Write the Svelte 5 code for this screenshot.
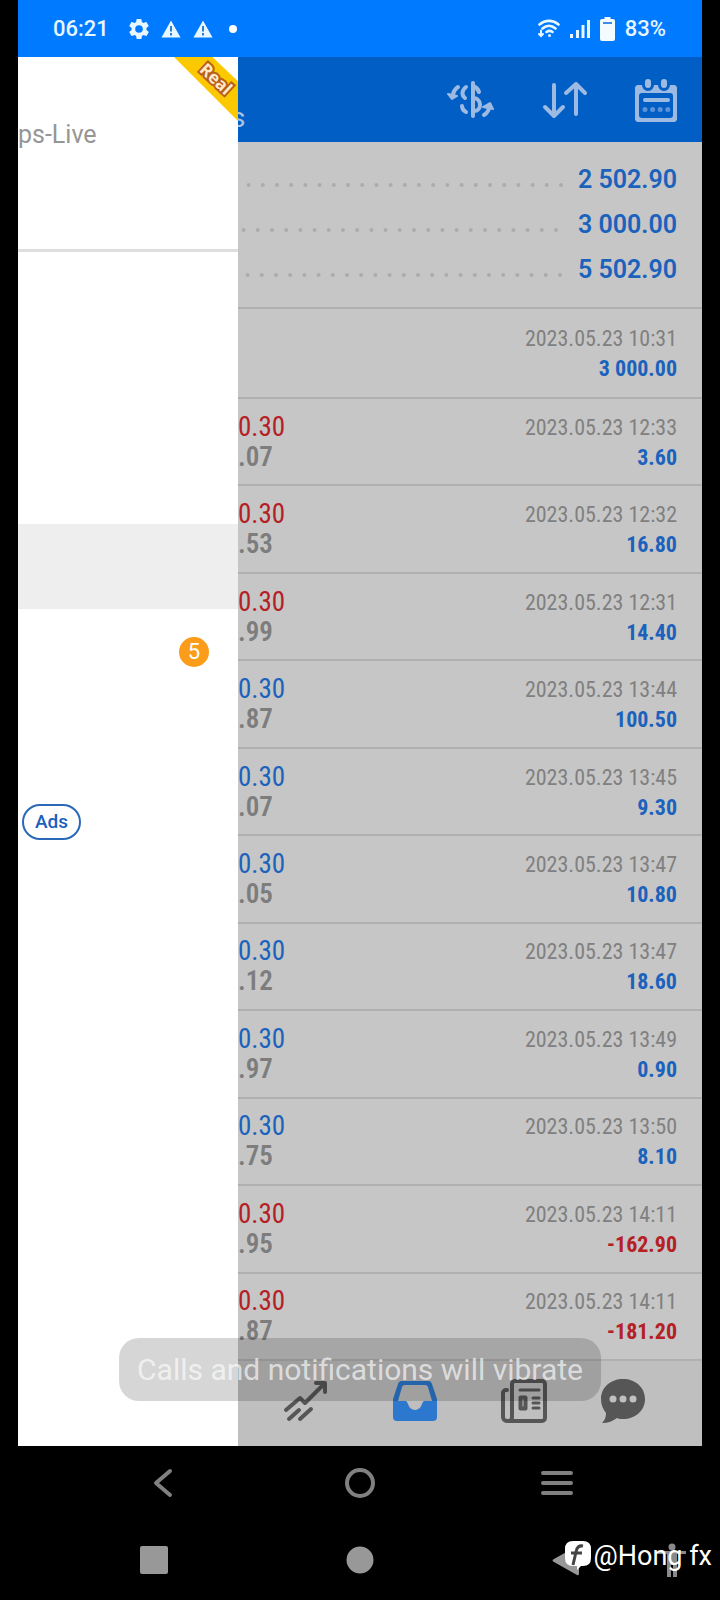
<svelte:options runes={true} />

<script>
	const summary = [
		{ value: '2 502.90', phase: 0 },
		{ value: '3 000.00', phase: 5 },
		{ value: '5 502.90', phase: 1 }
	];

	const deals = [
		{ date: '2023.05.23 10:31', profit: '3 000.00' },
		{ side: 'sell', volume: '0.30', price: '.07', date: '2023.05.23 12:33', profit: '3.60' },
		{ side: 'sell', volume: '0.30', price: '.53', date: '2023.05.23 12:32', profit: '16.80' },
		{ side: 'sell', volume: '0.30', price: '.99', date: '2023.05.23 12:31', profit: '14.40' },
		{ side: 'buy', volume: '0.30', price: '.87', date: '2023.05.23 13:44', profit: '100.50' },
		{ side: 'buy', volume: '0.30', price: '.07', date: '2023.05.23 13:45', profit: '9.30' },
		{ side: 'buy', volume: '0.30', price: '.05', date: '2023.05.23 13:47', profit: '10.80' },
		{ side: 'buy', volume: '0.30', price: '.12', date: '2023.05.23 13:47', profit: '18.60' },
		{ side: 'buy', volume: '0.30', price: '.97', date: '2023.05.23 13:49', profit: '0.90' },
		{ side: 'buy', volume: '0.30', price: '.75', date: '2023.05.23 13:50', profit: '8.10' },
		{ side: 'sell', volume: '0.30', price: '.95', date: '2023.05.23 14:11', profit: '-162.90' },
		{ side: 'sell', volume: '0.30', price: '.87', date: '2023.05.23 14:11', profit: '-181.20' }
	];

	const menu = [
		{ name: 'Trade' },
		{ name: 'News' },
		{ name: 'Charts' },
		{ name: 'History', active: true },
		{ name: 'Mailbox', count: '5' },
		{ name: 'Journal' },
		{ name: 'Settings', ads: true }
	];
</script>

<div class="page">
	<header class="status">
		<span class="clock">06:21</span>
		<div class="status-left">
			<svg width="20" height="20" viewBox="2 2 20 20" fill="#e8f6ff">
				<path
					fill-rule="evenodd"
					d="M19.4 13a7.500 7.500 0 0 0 0-2l2.100-1.650a.5.5 0 0 0 .12-.64l-2-3.460a.5.5 0 0 0-.61-.22l-2.490 1a7.300 7.300 0 0 0-1.690-.98l-.38-2.650A.49.49 0 0 0 14 2h-4a.49.49 0 0 0-.49.420l-.38 2.650c-.61.25-1.170.59-1.690.98l-2.490-1a.49.49 0 0 0-.61.22l-2 3.460a.49.49 0 0 0 .12.640L4.600 11a7.500 7.500 0 0 0 0 2l-2.110 1.650a.5.5 0 0 0-.12.64l2 3.460c.12.22.39.3.61.22l2.490-1c.52.4 1.080.73 1.690.98l.38 2.650c.03.24.24.42.49.42h4c.25 0 .46-.18.49-.42l.38-2.650a7.300 7.300 0 0 0 1.690-.98l2.490 1c.23.09.49 0 .61-.22l2-3.460a.5.5 0 0 0-.12-.64zM12 15.800a3.800 3.800 0 1 1 0-7.600 3.800 3.800 0 0 1 0 7.600z"
				/>
			</svg>
			{#each [1, 2] as n (n)}
				<svg width="20" height="18" viewBox="0 0 20 18">
					<path d="M10 0.500 19.500 17.500H0.500z" fill="#e8f6ff" />
					<path d="M10 6v5.500M10 13v2.500" stroke="#2a7fd0" stroke-width="2" />
				</svg>
			{/each}
			<svg class="more" width="8" height="8" viewBox="0 0 8 8"><circle cx="4" cy="4" r="4" fill="#fff" /></svg>
		</div>
		<div class="status-right">
			<svg width="22" height="20" viewBox="0 0 22 20" fill="none" stroke="#e8f6ff" stroke-width="2.600" stroke-linecap="round">
				<path d="M1.500 5.500C7 .6 15 .6 20.500 5.500M4.500 9.500c4-3.600 9-3.600 13 0M8.500 13c2-1.500 4-1.500 6 0" />
				<circle cx="11.500" cy="16.500" r="1.500" fill="#e8f6ff" stroke="none" />
				<path d="M3 11.500v5M1 15l2 2 2-2" stroke-width="2" />
			</svg>
			<svg width="20" height="20" viewBox="0 0 20 20" fill="#e8f6ff">
				<path d="M0 15h3v4H0zM6 11h3v8H6zM11.500 6h3v13h-3zM17 1h3v18h-3z" />
			</svg>
			<svg width="15" height="24" viewBox="0 0 15 24">
				<path d="M4.500 0h6v2H13a2 2 0 0 1 2 2v18a2 2 0 0 1-2 2H2a2 2 0 0 1-2-2V4a2 2 0 0 1 2-2h2.500z" fill="#f4fbff" />
				<path d="M3 6h9" stroke="#3b8ee8" stroke-width="2" />
			</svg>
			<span>83%</span>
		</div>
	</header>

	<div class="app">
		<aside class="drawer">
			<div class="account">
				<div class="ribbon"><span>Real</span></div>
				<span class="server">ps-Live</span>
			</div>
			<nav class="menu">
				{#each menu as item (item.name)}
					<a href="#{item.name.toLowerCase()}" class="menu-item" class:active={item.active} aria-label={item.name}>
						{#if item.count}<span class="count">{item.count}</span>{/if}
						{#if item.ads}<span class="ads">Ads</span>{/if}
					</a>
				{/each}
			</nav>
		</aside>

		<main class="history">
			<div class="toolbar">
				<span class="toolbar-title">s</span>
				<button aria-label="Symbols">
					<svg width="48" height="38" viewBox="0 0 48 38" fill="none" stroke="#9dbbe2" stroke-width="4" stroke-linecap="round">
						<path d="M26 2v33" />
						<path d="M32 11c-1-3-3-5-6-6M27 17c8 1 8 13 0 13" />
						<path d="M19 6c-4 3-5 8-1 11M15 25c0 3 2 5 4 6" />
						<path d="M11 6c-3 2-5 5-5 9" />
						<path d="M1 13 5 18 10 15z" fill="#9dbbe2" stroke-width="2" stroke-linejoin="round" />
						<path d="M37 34c3-2 5-4 5-8" />
						<path d="M36 26 43 22l3 6z" fill="#9dbbe2" stroke-width="2" stroke-linejoin="round" />
					</svg>
				</button>
				<button aria-label="Sort">
					<svg width="46" height="38" viewBox="0 0 46 38" fill="none" stroke="#9dbbe2" stroke-width="4" stroke-linecap="round" stroke-linejoin="round">
						<path d="M12 4v31M3 26l9 9 9-9M34 33V3M24 12l10-9 9 9" />
					</svg>
				</button>
				<button aria-label="Period">
					<svg width="42" height="44" viewBox="0 0 42 44">
						<path fill-rule="evenodd" fill="#9dbbe2" d="M2 7h5a6 6 0 0 0 12 0h4a6 6 0 0 0 12 0h5l2 2v33l-2 2H2l-2-2V9zM7 15a3 3 0 0 0-3 3v19a3 3 0 0 0 3 3h28a3 3 0 0 0 3-3V18a3 3 0 0 0-3-3z" />
						<rect x="10" y="1" width="6" height="9" rx="3" fill="#9dbbe2" />
						<rect x="26" y="1" width="6" height="9" rx="3" fill="#9dbbe2" />
						<path d="M10 22h23" stroke="#9dbbe2" stroke-width="4" stroke-linecap="round" />
						<path d="M10 31.500h24" stroke="#5b93d8" stroke-width="5" stroke-linecap="round" stroke-dasharray="0 7.600" />
					</svg>
				</button>
			</div>

			<div class="summary">
				{#each summary as line (line.value)}
					<div class="summary-row">
						<svg class="leader" width="100%" height="6">
							<line x1="100%" y1="3" x2="0" y2="3" stroke-dashoffset={-line.phase} />
						</svg>
						<strong>{line.value}</strong>
					</div>
				{/each}
			</div>

			<ul class="deals">
				{#each deals as deal}
					<li>
						<div class="deal-left">
							{#if deal.volume}
								<span class="volume {deal.side}">{deal.volume}</span>
								<span class="price">{deal.price}</span>
							{/if}
						</div>
						<div class="deal-right">
							<time>{deal.date}</time>
							<strong class:loss={deal.profit.startsWith('-')}>{deal.profit}</strong>
						</div>
					</li>
				{/each}
			</ul>

			<nav class="tabs">
				<button aria-label="Trade">
					<svg width="44" height="44" viewBox="0 0 44 44" fill="none" stroke="#565656" stroke-width="4" stroke-linecap="round" stroke-linejoin="round">
						<path d="M3 31 17 19l5 5L41 5M33 4h9v9M6 40l10-9M17 40l11-10" />
					</svg>
				</button>
				<button aria-label="History">
					<svg width="44" height="44" viewBox="0 0 44 44">
						<path fill="#2c78cf" fill-rule="evenodd" d="M9 2h26a4 4 0 0 1 4 3l5 15v18a4 4 0 0 1-4 4H4a4 4 0 0 1-4-4V20L5 5a4 4 0 0 1 4-3zM12 6a3 3 0 0 0-3 2L5 22h8c2 0 2 9 9 9s7-9 9-9h8L35 8a3 3 0 0 0-3-2z" />
					</svg>
				</button>
				<button aria-label="News">
					<svg width="46" height="44" viewBox="0 0 46 44" fill="none" stroke="#565656" stroke-width="4" stroke-linecap="round" stroke-linejoin="round">
						<path d="M6 11H5a3 3 0 0 0-3 3v24a4 4 0 0 0 4 4h35a3 3 0 0 0 3-3V5a3 3 0 0 0-3-3H14a3 3 0 0 0-3 3v33a4 4 0 0 1-3 4" />
						<path d="M19 11h19M32 19h6M32 24h6M32 29h6" stroke-width="3" />
						<path d="M19.500 18.500h5v11h-5z" />
					</svg>
				</button>
				<button aria-label="Messages">
					<svg width="44" height="46" viewBox="0 0 44 46">
						<path fill="#565656" d="M22 1c12 0 22 8 22 20s-10 20-22 20c-2 0-4 0-6-1-4 3-9 5-15 5 3-3 4-6 4-10C2 31 0 27 0 21 0 9 10 1 22 1z" />
						<g fill="#c0c0c0"><circle cx="12" cy="21" r="3.500" /><circle cx="22" cy="21" r="3.500" /><circle cx="32" cy="21" r="3.500" /></g>
					</svg>
				</button>
			</nav>
		</main>
		<div class="toast" role="status">Calls and notifications will vibrate</div>
	</div>

	<nav class="system">
		<button aria-label="Back">
			<svg width="20" height="30" viewBox="0 0 20 30" fill="none" stroke="#808080" stroke-width="4" stroke-linecap="round" stroke-linejoin="round">
				<path d="M17 3 3 15l14 12" />
			</svg>
		</button>
		<button aria-label="Home">
			<svg width="32" height="32" viewBox="0 0 32 32" fill="none" stroke="#808080" stroke-width="4"><circle cx="16" cy="16" r="13" /></svg>
		</button>
		<button aria-label="Recent apps">
			<svg width="32" height="26" viewBox="0 0 32 26" stroke="#808080" stroke-width="4" stroke-linecap="round"><path d="M2 3h28M2 13h28M2 23h28" /></svg>
		</button>
	</nav>

	<nav class="system outer">
		<button aria-label="Recent apps">
			<svg width="30" height="30" viewBox="0 0 30 30"><rect x="1" y="1" width="28" height="28" rx="2" fill="#989898" /></svg>
		</button>
		<button aria-label="Home">
			<svg width="28" height="28" viewBox="0 0 28 28"><circle cx="14" cy="14" r="13.500" fill="#989898" /></svg>
		</button>
		<button aria-label="Back">
			<svg width="28" height="32" viewBox="0 0 28 32"><path d="M2 15 25 2q2-1 2 2v25q0 3-2 2L2 18q-3-1.500 0-3z" fill="#989898" /></svg>
		</button>
		<button aria-label="Accessibility">
			<svg width="28" height="34" viewBox="0 0 28 34" fill="#8a8a8a">
				<circle cx="14" cy="4" r="3.500" />
				<path d="M0 8h28v3h-9v23h-4V22h-2v12H9V11H0z" />
			</svg>
		</button>
		<div class="watermark">
			<svg width="26" height="30" viewBox="0 0 26 30">
				<path d="M8 0h10q8 0 8 8v9q0 8-8 8h-2l-4 4v-4H8q-8 0-8-8V8q0-8 8-8z" fill="#fff" />
				<path d="M18 5q-6-1-7 6L8 24M6 12h11" fill="none" stroke="#444" stroke-width="3" />
			</svg>
			<span>@Hong fx</span>
		</div>
	</nav>
</div>

<style>
	:global(body) {
		background: #000;
	}

	.page {
		display: flex;
		flex-direction: column;
		min-height: 100vh;
		background: #000;
		font-family: Roboto, 'Liberation Sans', sans-serif;
	}

	svg {
		display: block;
		flex-shrink: 0;
	}

	button {
		display: flex;
		align-items: center;
		justify-content: center;
		padding: 0;
		border: 0;
		background: none;
	}

	.status {
		display: flex;
		align-items: center;
		height: 57px;
		margin: 0 18px;
		padding: 0 36px 0 35px;
		background: #007aff;
		color: #e8f6ff;
		font-size: 22px;
		font-weight: 500;
	}

	.status-left {
		display: flex;
		align-items: center;
		gap: 12px;
		margin-left: 20px;
	}

	.more {
		margin-left: 4px;
	}

	.status-right {
		display: flex;
		align-items: center;
		gap: 10px;
		margin-left: auto;
	}

	.app {
		position: relative;
		flex: 1;
		display: flex;
		margin: 0 18px;
	}

	.drawer {
		flex: 0 0 220px;
		background: #fff;
		overflow: hidden;
	}

	.account {
		position: relative;
		height: 192px;
		border-bottom: 3px solid #dedede;
		color: #969696;
		font-size: 25px;
	}

	.server {
		display: block;
		padding-top: 62px;
		line-height: 32px;
	}

	.ribbon {
		position: absolute;
		top: 0;
		right: 0;
		width: 64px;
		height: 64px;
		background: #fcc800;
		clip-path: polygon(0 0, 60% 0, 100% 38%, 100% 100%);
	}

	.ribbon span {
		position: absolute;
		top: 10px;
		right: 0;
		width: 44px;
		line-height: 24px;
		text-align: center;
		transform: rotate(43deg);
		color: #ffe9c8;
		font-family: 'Open Sans', sans-serif;
		font-size: 17px;
		font-weight: 700;
		-webkit-text-stroke: 4px #b8601c;
		paint-order: stroke fill;
	}

	.menu {
		padding-top: 17px;
	}

	.menu-item {
		display: flex;
		align-items: center;
		height: 85px;
		padding: 0 29px 0 4px;
		color: #1b5fbe;
		text-decoration: none;
	}

	.menu-item.active {
		background: #eee;
	}

	.count {
		width: 30px;
		margin-left: auto;
		border-radius: 50%;
		background: #fb9c1b;
		color: #fff;
		font-size: 22px;
		line-height: 30px;
		text-align: center;
	}

	.ads {
		padding: 0 11px;
		border: 2px solid #2a68b8;
		border-radius: 18px;
		font-size: 19px;
		font-weight: 500;
		line-height: 32px;
	}

	.history {
		flex: 1;
		display: flex;
		flex-direction: column;
		min-width: 0;
		overflow: hidden;
		background: #c6c6c6;
	}

	.toolbar {
		display: flex;
		align-items: center;
		gap: 47px;
		height: 85px;
		padding-right: 25px;
		background: #005ec5;
	}

	.toolbar-title {
		margin: 36px auto 0 -7px;
		color: #a9c3e6;
		font-size: 28px;
	}

	.summary {
		padding: 15px 25px 15px 0;
		border-bottom: 2px solid #b0b0b0;
	}

	.summary-row {
		display: flex;
		align-items: center;
		gap: 17px;
		height: 45px;
		color: #1b62bd;
		font-size: 25px;
	}

	.summary-row strong {
		font-weight: 600;
	}

	.leader {
		flex: 1;
		min-width: 0;
		margin-top: 10px;
		overflow: visible;
	}

	.leader line {
		stroke: #acacac;
		stroke-width: 4px;
		stroke-linecap: round;
		stroke-dasharray: 0 14.2;
	}

	.deals {
		flex: 1;
		display: grid;
		grid-template-rows: 90px;
		grid-auto-rows: 1fr;
		margin: 0;
		padding: 0;
		list-style: none;
		font-family: 'Roboto Condensed', 'Liberation Sans Narrow', Roboto, sans-serif;
		line-height: 30px;
	}

	.deals li {
		display: flex;
		align-items: center;
		justify-content: space-between;
		padding-right: 25px;
		border-bottom: 2px solid #b0b0b0;
	}

	.deal-left,
	.deal-right {
		display: flex;
		flex-direction: column;
	}

	.deal-left {
		font-size: 27px;
	}

	.deal-right {
		align-items: flex-end;
		padding-top: 2px;
		font-size: 22px;
	}

	.volume.sell,
	.deal-right .loss {
		color: #b42025;
	}

	.volume.buy,
	.deal-right strong {
		color: #1b62bd;
	}

	.price {
		color: #7d7d7d;
		font-weight: 600;
	}

	time {
		color: #808080;
	}

	.tabs {
		display: grid;
		grid-template-columns: 5fr 5fr 5fr 4fr;
		box-sizing: border-box;
		height: 85px;
		padding: 0 35px 5px 12px;
		background: #bfbfbf;
	}

	.toast {
		position: absolute;
		bottom: 45px;
		left: 50%;
		transform: translateX(-50%);
		padding: 0 18px;
		border-radius: 20px;
		background: rgba(0, 0, 0, 0.16);
		color: rgba(255, 255, 255, 0.65);
		font-size: 30px;
		line-height: 63px;
		white-space: nowrap;
	}

	.system {
		display: grid;
		grid-template-columns: repeat(3, 1fr);
		height: 74px;
		padding: 0 64px;
	}

	.system.outer {
		position: relative;
		grid-template-columns: repeat(3, minmax(0, 34fr)) minmax(0, 1fr);
		height: 80px;
		padding: 0 45px 0 51px;
	}

	.watermark {
		position: absolute;
		top: 20px;
		right: 8px;
		display: flex;
		align-items: center;
		gap: 3px;
		color: #fff;
		font-size: 27px;
	}
</style>
